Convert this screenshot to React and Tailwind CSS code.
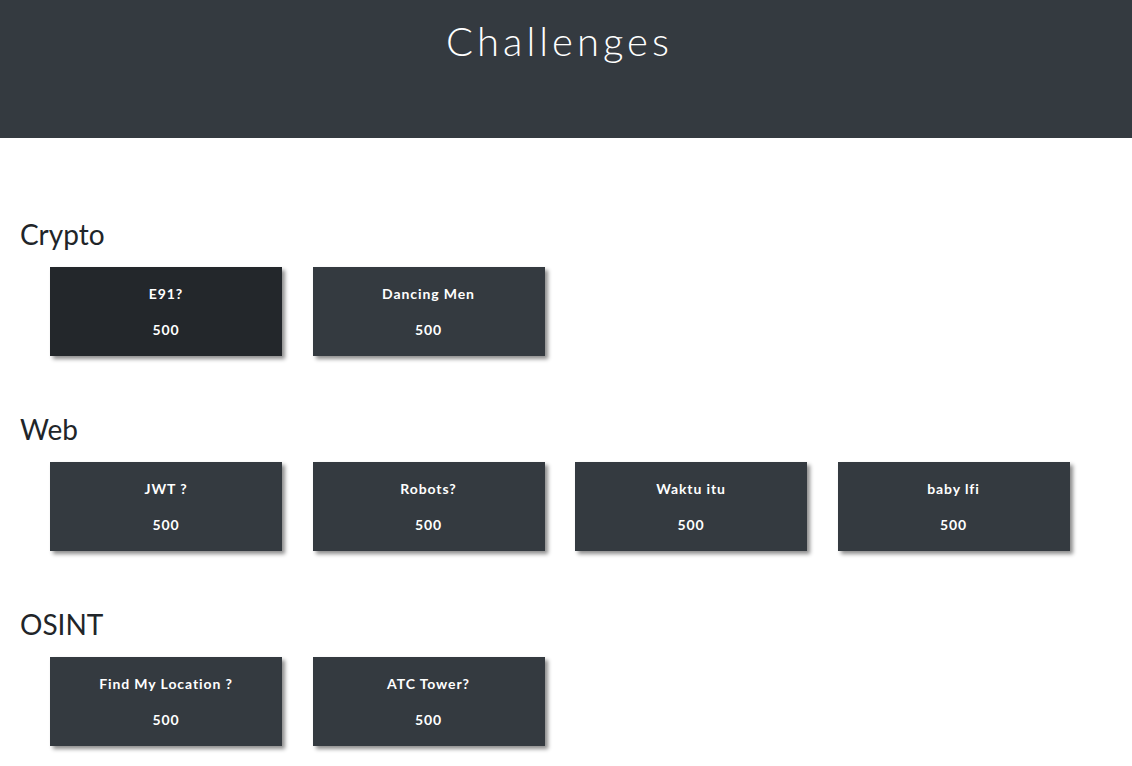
const categories = [
  {
    name: 'Crypto',
    challenges: [
      { title: 'E91?', value: 500, active: true },
      { title: 'Dancing Men', value: 500 },
    ],
  },
  {
    name: 'Web',
    challenges: [
      { title: 'JWT ?', value: 500 },
      { title: 'Robots?', value: 500 },
      { title: 'Waktu itu', value: 500 },
      { title: 'baby lfi', value: 500 },
    ],
  },
  {
    name: 'OSINT',
    challenges: [
      { title: 'Find My Location ?', value: 500 },
      { title: 'ATC Tower?', value: 500 },
    ],
  },
];

function ChallengeButton({ title, value, active }) {
  return (
    <button
      className={
        'w-[232px] h-[89px] flex flex-col items-center text-white font-bold text-[14px] tracking-[0.9px] shadow-[3px_3px_4px_rgba(0,0,0,0.45)] ' +
        (active ? 'bg-[#23272b]' : 'bg-[#343a40]')
      }
    >
      <span className="mt-[18px] leading-[18px]">{title}</span>
      <span className="mt-[18px] leading-[18px]">{value}</span>
    </button>
  );
}

export default function App() {
  return (
    <div className="min-h-screen bg-white font-['Lato',sans-serif]">
      {/* Jumbotron */}
      <div className="h-[138px] bg-[#343a40] flex justify-center">
        <h1 className="mt-[17px] text-[40px] leading-[48px] font-light text-white tracking-[4px] pr-[13px] font-['Lato',sans-serif]">
          Challenges
        </h1>
      </div>

      <div className="pt-[79px] pb-6">
        {categories.map((cat) => (
          <div key={cat.name} className="mb-[56px]">
            <h3 className="pl-5 text-[28px] leading-[34px] text-[#212529] mb-[16px]">{cat.name}</h3>
            <div className="flex gap-[30.5px] pl-[50px]">
              {cat.challenges.map((c) => (
                <ChallengeButton key={c.title} {...c} />
              ))}
            </div>
          </div>
        ))}
      </div>
    </div>
  );
}
